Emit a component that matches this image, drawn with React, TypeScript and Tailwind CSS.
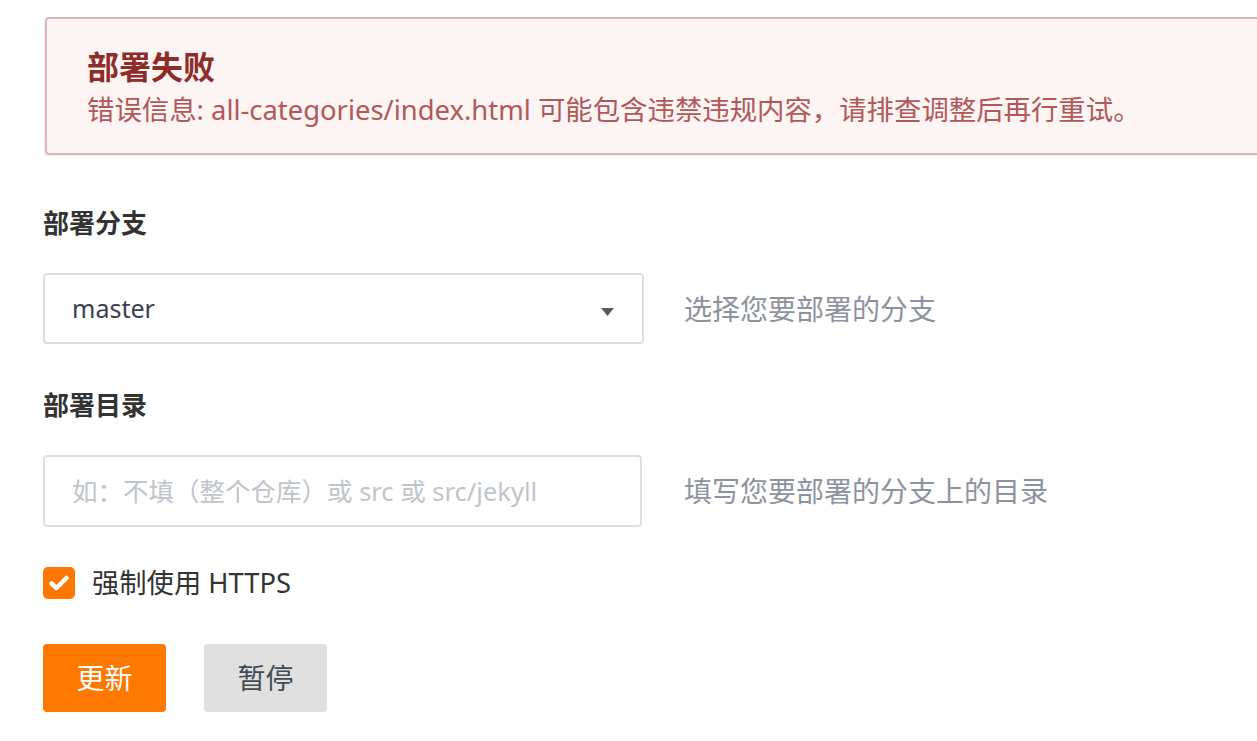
import React from "react";

const font = "font-['Noto_Sans','Noto_Sans_CJK_SC',sans-serif]";

const DeployForm = () => {
  return (
    <div className={`h-[741px] w-full overflow-hidden bg-white ${font}`}>
      <div className="ml-[45px] mt-[17px] flex h-[138px] w-[1240px] flex-col rounded-[4px] border-2 border-[#dcb6ba] bg-[#fdf4f4] pl-[40px] pt-[27px] shadow-[-1px_1px_2px_rgba(0,0,0,0.08)]">
        <h2 className="text-[32px] font-bold leading-[42px] text-[#8e2c2a]">
          部署失败
        </h2>
        <p className="mt-[4px] text-[27.4px] leading-[36px] text-[#b0585a]">
          错误信息: all-categories/index.html 可能包含违禁违规内容，请排查调整后再行重试。
        </p>
      </div>

      <div className="flex flex-col pl-[43px]">
        <label className="mt-[50px] text-[26px] font-bold leading-[36px] text-[#333]">
          部署分支
        </label>
        <div className="mt-[32px] flex items-center gap-[40px]">
          <div className="flex h-[71px] w-[601px] items-center justify-between rounded-[4px] border-2 border-[#dcdfe4] pl-[27px] pr-[28px]">
            <span className="text-[25px] text-[#3a4150]">master</span>
            <svg width="13" height="8" viewBox="0 0 13 8" className="mt-[6px]">
              <path d="M0 0 H13 L6.5 8 Z" fill="#555d69" />
            </svg>
          </div>
          <span className="text-[28px] text-[#8d939d]">选择您要部署的分支</span>
        </div>

        <label className="mt-[43px] text-[26px] font-bold leading-[36px] text-[#333]">
          部署目录
        </label>
        <div className="mt-[32px] flex items-center gap-[42px]">
          <div className="flex h-[72px] w-[599px] items-center rounded-[4px] border-2 border-[#dcdfe4] pl-[27px]">
            <span className="text-[25.5px] text-[#c0c4cb]">
              如：不填（整个仓库）或 src 或 src/jekyll
            </span>
          </div>
          <span className="text-[28px] text-[#8d939d]">
            填写您要部署的分支上的目录
          </span>
        </div>

        <div className="mt-[36px] flex h-[40px] items-center gap-[17px]">
          <div className="flex h-[32px] w-[32px] items-center justify-center rounded-[5px] bg-[#ff7600]">
            <svg width="20" height="16" viewBox="0 0 20 16">
              <path
                d="M2.5 8.5 L7.5 13 L17.5 3"
                stroke="white"
                strokeWidth="4.5"
                fill="none"
                strokeLinecap="round"
                strokeLinejoin="round"
              />
            </svg>
          </div>
          <span className="text-[27.3px] leading-[40px] text-[#333]">强制使用 HTTPS</span>
        </div>

        <div className="mt-[41px] flex gap-[38px]">
          <button className="flex h-[68px] w-[123px] items-center justify-center rounded-[4px] bg-[#ff7800] text-[28px] text-white">
            更新
          </button>
          <button className="flex h-[68px] w-[123px] items-center justify-center rounded-[4px] bg-[#e0e0e0] text-[28px] text-[#434b55]">
            暂停
          </button>
        </div>
      </div>
    </div>
  );
};

export default function App() {
  return <DeployForm />;
}
